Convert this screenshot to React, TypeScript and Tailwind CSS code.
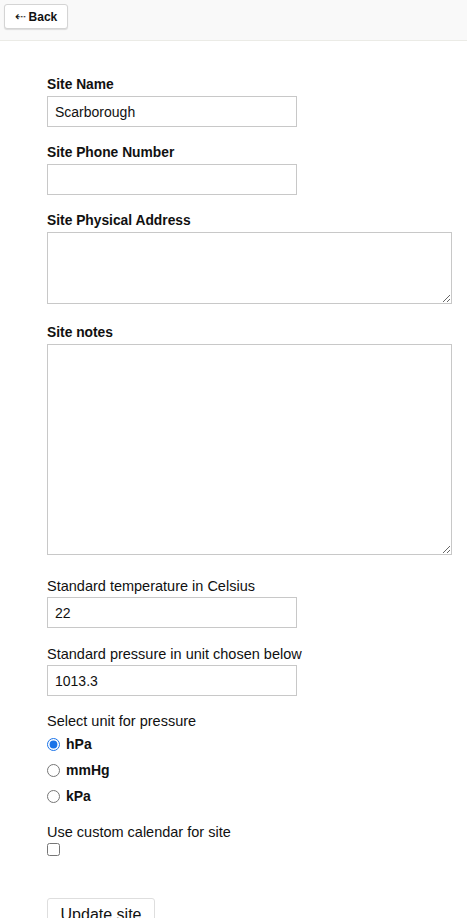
import { useState } from "react";

const units = ["hPa", "mmHg", "kPa"];

const inputCls =
  "block h-[31px] w-[250px] border border-[#c8c8c8] bg-white px-[7px] text-[14px] text-[#111] outline-none";
const boldLabel = "mb-px block text-[13.8px] font-bold leading-5";
const plainLabel = "mb-px block text-[14.5px] leading-5";

const App = () => {
  const [unit, setUnit] = useState("hPa");

  return (
    <div className="min-h-screen bg-white font-['Liberation_Sans',Arial,sans-serif] text-[#111]">
      <header className="h-[41px] border-b border-[#ebebe6] bg-[#f9f9f9] px-1 pt-1">
        <button className="flex h-[25px] w-[64px] items-center justify-center gap-[3px] rounded-[3px] border border-[#d4d4d4] bg-white text-[12px] font-bold shadow-[0_1px_1px_rgba(0,0,0,0.12)]">
          <span className="font-['DejaVu_Sans',sans-serif] text-[13px] font-normal leading-none">⇠</span>
          Back
        </button>
      </header>

      <form className="pl-[47px] pr-[15px] pt-[34px]">
        <div className="mb-4">
          <label className={boldLabel}>Site Name</label>
          <input className={inputCls} defaultValue="Scarborough" />
        </div>
        <div className="mb-4">
          <label className={boldLabel}>Site Phone Number</label>
          <input className={inputCls} />
        </div>
        <div className="mb-[19px]">
          <label className={boldLabel}>Site Physical Address</label>
          <textarea className="block h-[72px] w-full resize border border-[#c8c8c8] bg-white outline-none" />
        </div>
        <div className="mb-[21px]">
          <label className={boldLabel}>Site notes</label>
          <textarea className="block h-[211px] w-full resize border border-[#c8c8c8] bg-white outline-none" />
        </div>
        <div className="mb-4">
          <label className={plainLabel}>Standard temperature in Celsius</label>
          <input className={inputCls} defaultValue="22" />
        </div>
        <div className="mb-[15px]">
          <label className={plainLabel}>Standard pressure in unit chosen below</label>
          <input className={inputCls} defaultValue="1013.3" />
        </div>

        <div className="text-[14.5px] leading-5">Select unit for pressure</div>
        {units.map((u) => (
          <label key={u} className="flex h-[26px] items-center gap-[6px] text-[14px] font-bold">
            <input
              type="radio"
              name="unit"
              className="m-0 h-[13px] w-[13px] accent-[#1a73e8]"
              checked={unit === u}
              onChange={() => setUnit(u)}
            />
            {u}
          </label>
        ))}

        <div className="mt-[13px] text-[14.5px] leading-5">Use custom calendar for site</div>
        <input type="checkbox" className="m-0 mt-px block h-[13px] w-[13px]" />

        <button
          type="button"
          className="mt-[42px] h-[34px] w-[108px] rounded-[3px] border border-[#dedede] bg-white text-[16px] font-medium"
        >
          Update site
        </button>
      </form>
    </div>
  );
};

export default App;
